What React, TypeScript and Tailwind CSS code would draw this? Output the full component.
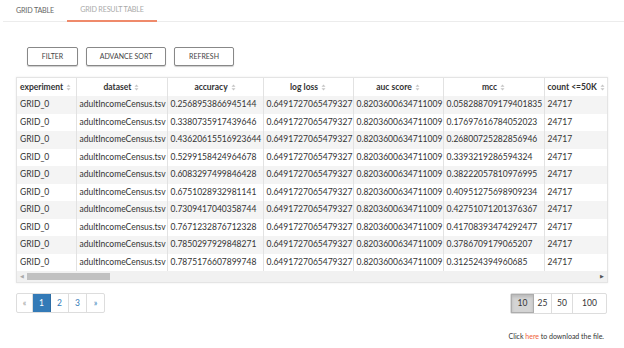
import React from "react";

const accuracy = [
  "0.2568953866945144",
  "0.3380735917439646",
  "0.43620615516923644",
  "0.5299158424964678",
  "0.6083297499846428",
  "0.6751028932981141",
  "0.7309417040358744",
  "0.7671232876712328",
  "0.7850297929848271",
  "0.7875176607899748",
];

const mcc = [
  "0.058288709179401835",
  "0.17697616784052023",
  "0.26800725282856946",
  "0.3393219286594324",
  "0.38222057810976995",
  "0.40951275698909234",
  "0.42751071201376367",
  "0.41708393474292477",
  "0.3786709179065207",
  "0.312524394960685",
];

const columns = [
  { label: "experiment", w: "w-[59px]" },
  { label: "dataset", w: "w-[91px]" },
  { label: "accuracy", w: "w-[96px]" },
  { label: "log loss", w: "w-[90px]" },
  { label: "auc score", w: "w-[90px]" },
  { label: "mcc", w: "w-[101px]" },
  { label: "count <=50K", w: "w-[72px]" },
];

function SortIcon() {
  return (
    <svg width="5" height="7" viewBox="0 0 5 7" className="inline-block ml-[3px] align-middle">
      <path d="M2.5 0.5 L4.5 2.8 H0.5 Z" fill="#c4c4c4" />
      <path d="M2.5 6.5 L4.5 4.2 H0.5 Z" fill="#c4c4c4" />
    </svg>
  );
}

export default function App() {
  return (
    <div
      className="w-[624px] h-[348px] bg-white text-[#333] overflow-hidden"
      style={{ fontFamily: "Lato, 'Open Sans', sans-serif" }}
    >
      {/* tabs */}
      <div className="flex items-end h-[22px] border-b border-[#ececec] ml-[3px] text-[7.2px] tracking-tight">
        <div className="w-[64px] h-full flex items-center justify-center text-[#666] pt-[1px]">GRID TABLE</div>
        <div className="w-[90px] h-full flex items-center justify-center text-[#aaa] border-b-[2px] border-[#ef8a6b] mb-[-1px]">
          GRID RESULT TABLE
        </div>
      </div>

      {/* buttons */}
      <div className="flex gap-[8px] pl-[27px] pt-[25px] text-[7px] text-[#444]">
        <button className="w-[51px] h-[19px] border border-[#888] rounded-[2px] shadow-[0_1px_1px_rgba(0,0,0,0.2)] bg-white">
          FILTER
        </button>
        <button className="w-[80px] h-[19px] border border-[#888] rounded-[2px] shadow-[0_1px_1px_rgba(0,0,0,0.2)] bg-white">
          ADVANCE SORT
        </button>
        <button className="w-[60px] h-[19px] border border-[#888] rounded-[2px] shadow-[0_1px_1px_rgba(0,0,0,0.2)] bg-white">
          REFRESH
        </button>
      </div>

      {/* table */}
      <div className="ml-[16px] mt-[11px] w-[592px] border border-[#e4e4e4] shadow-[0_0_2px_rgba(0,0,0,0.08)]">
        <div className="w-[590px] overflow-hidden">
          <table className="table-fixed border-collapse text-[8.5px] w-[599px]">
            <thead>
              <tr className="h-[18px] bg-white">
                {columns.map((c, i) => (
                  <th
                    key={c.label}
                    className={`${c.w} border-r border-[#e2e2e2] font-bold whitespace-nowrap px-[3px] ${
                      i === 0 || i === 6 ? "text-left" : "text-center"
                    }`}
                  >
                    {c.label}
                    <SortIcon />
                  </th>
                ))}
              </tr>
            </thead>
            <tbody>
              {accuracy.map((a, i) => (
                <tr key={a} className={`h-[17.5px] ${i % 2 === 0 ? "bg-[#f4f4f4]" : "bg-white"}`}>
                  <td className="border-r border-[#e2e2e2] px-[3px] whitespace-nowrap">GRID_0</td>
                  <td className="border-r border-[#e2e2e2] px-[3px] whitespace-nowrap">adultIncomeCensus.tsv</td>
                  <td className="border-r border-[#e2e2e2] px-[3px] whitespace-nowrap">{a}</td>
                  <td className="border-r border-[#e2e2e2] px-[3px] whitespace-nowrap">0.6491727065479327</td>
                  <td className="border-r border-[#e2e2e2] px-[3px] whitespace-nowrap">0.8203600634711009</td>
                  <td className="border-r border-[#e2e2e2] px-[3px] whitespace-nowrap">{mcc[i]}</td>
                  <td className="px-[3px] whitespace-nowrap">24717</td>
                </tr>
              ))}
            </tbody>
          </table>
        </div>
        {/* scrollbar */}
        <div className="h-[11px] bg-[#f1f1f1] flex items-center">
          <span className="w-[10px] text-[5px] text-[#aaa] text-center leading-none">◀</span>
          <div className="w-[83px] h-[7px] bg-[#c1c1c1]" />
          <div className="flex-1" />
          <span className="w-[10px] text-[5px] text-[#555] text-center leading-none">▶</span>
        </div>
      </div>

      {/* pagination */}
      <div className="flex justify-between items-start px-[16px] mt-[10px] text-[8.5px]">
        <div className="flex border border-[#ddd] rounded-[2px] h-[20px]">
          <span className="w-[16px] flex items-center justify-center text-[#999] border-r border-[#ddd]">«</span>
          <span className="w-[18px] flex items-center justify-center bg-[#337ab7] text-white border-r border-[#2e6da4]">1</span>
          <span className="w-[18px] flex items-center justify-center text-[#337ab7] border-r border-[#ddd]">2</span>
          <span className="w-[18px] flex items-center justify-center text-[#337ab7] border-r border-[#ddd]">3</span>
          <span className="w-[17px] flex items-center justify-center text-[#337ab7]">»</span>
        </div>
        <div className="flex border border-[#ddd] rounded-[2px] h-[21px] mr-[1px] text-[#333]">
          <span className="w-[23px] flex items-center justify-center bg-[#d4d4d4] border border-[#adadad] shadow-[inset_0_2px_3px_rgba(0,0,0,0.12)]">10</span>
          <span className="w-[18px] flex items-center justify-center border-r border-[#ddd]">25</span>
          <span className="w-[21px] flex items-center justify-center border-r border-[#ddd]">50</span>
          <span className="w-[33px] flex items-center justify-center">100</span>
        </div>
      </div>

      <div className="flex justify-end pr-[20px] mt-[17px] text-[7px] text-[#333]">
        <span>
          Click <span className="text-[#f0603a]">here</span> to download the file.
        </span>
      </div>
    </div>
  );
}
